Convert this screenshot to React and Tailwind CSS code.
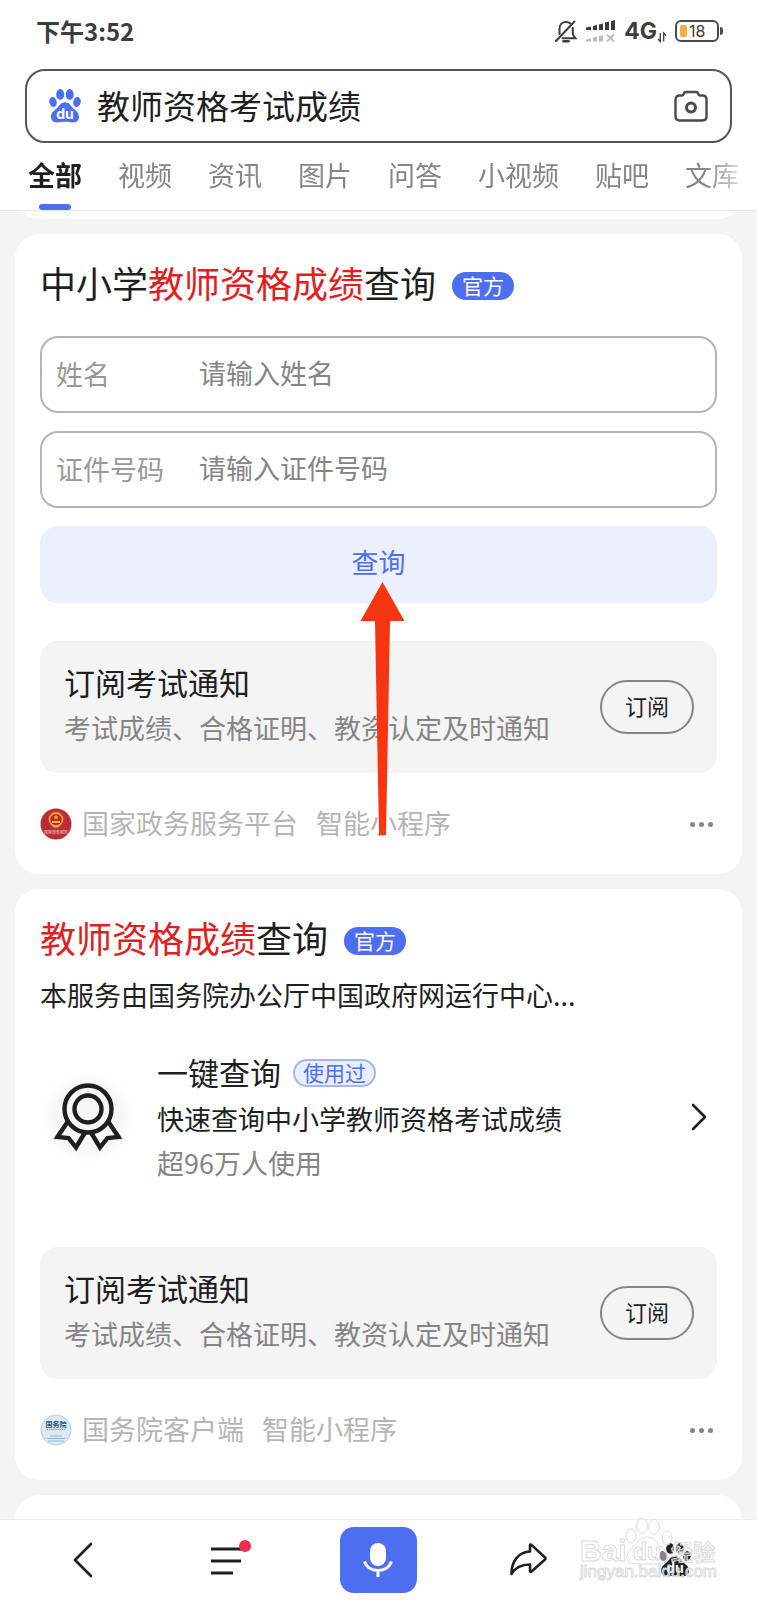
import { useState } from 'react';

const tabs = ['全部', '视频', '资讯', '图片', '问答', '小视频', '贴吧', '文库'];

function Paw({ className, duClass }) {
  return (
    <svg viewBox="0 0 32 34" className={className} fill="currentColor" aria-hidden="true">
      <ellipse cx="11.2" cy="5.4" rx="4" ry="5.3" />
      <ellipse cx="20.7" cy="5.4" rx="4" ry="5.3" />
      <ellipse cx="4" cy="13" rx="3.7" ry="5" transform="rotate(-12 4 13)" />
      <ellipse cx="28" cy="13" rx="3.7" ry="5" transform="rotate(12 28 13)" />
      <path d="M16 13.2c3.4 0 5 2.2 6.6 4.4 2.4 3.2 7.4 5.2 7.4 10.2 0 4.2-3 5.8-6.2 5.6-2.6-.2-5-.7-7.8-.7s-5.2.5-7.8.7C5 33.6 2 32 2 27.8c0-5 5-7 7.4-10.2C11 15.4 12.6 13.2 16 13.2z" />
      <text x="16" y="30" textAnchor="middle" className={duClass}>du</text>
    </svg>
  );
}

function StatusBar() {
  return (
    <div className="flex h-[62px] items-center justify-between pl-9 pr-[34px] text-[#3c3c3c]">
      <span className="text-2xl font-bold">下午3:52</span>
      <div className="flex items-center gap-2">
        <svg viewBox="0 0 24 24" className="size-6" fill="none" stroke="currentColor" strokeWidth="2" strokeLinecap="round">
          <path d="M2 22 20.5 2.5" />
          <path d="M5.5 15V9.5C5.5 5.5 8.3 3 12 3c1.8 0 3.2.5 4.3 1.5M18.8 9v6.5l2.7 3.8H8.5" />
          <path d="M9.5 22.2h5" strokeWidth="2.5" />
        </svg>
        <svg viewBox="0 0 30 24" className="h-6 w-[30px]" fill="currentColor">
          <path d="M0 8.5 5 7.5V11H0zM7 7l4-1v5H7zM13 5.5l4-1V11h-4zM19 3.5l4-1V11h-4zM25 2l4-1v10h-4z" />
          <path d="M0 20.5l5-1v3H0zM7 18.5l4-1v5H7zM13 17l4-1v6.5h-4z" fill="#bdbdbd" />
          <path d="m21 15.5 7 7m0-7-7 7" stroke="#bdbdbd" strokeWidth="2" />
        </svg>
        <div className="flex items-end">
          <span className="font-[Inter] text-[23px] leading-6 font-bold">4G</span>
          <svg viewBox="0 0 10 12" className="h-3 w-2.5" fill="none" stroke="currentColor" strokeWidth="1.3">
            <path d="M3.3 2v8.5L1 8M6.7 10.5V2L9 4.5" />
          </svg>
        </div>
        <div className="flex items-center">
          <div className="flex h-[22px] w-11 items-center gap-0.5 rounded-md border-2 border-[#4a4a4a] pl-[3px]">
            <span className="h-3 w-[7px] rounded-xs bg-[#f0b040]" />
            <span className="font-[Inter] text-base leading-4">18</span>
          </div>
          <span className="ml-px h-2 w-[3px] rounded-r-full bg-[#4a4a4a]" />
        </div>
      </div>
    </div>
  );
}

function SearchHeader() {
  const [query, setQuery] = useState('教师资格考试成绩');

  return (
    <header className="relative z-10 border-b border-[#e8e8e8] bg-white">
      <StatusBar />
      <div className="px-[25px] pt-[7px]">
        <form className="flex h-[74px] items-center rounded-[20px] border-2 border-[#555] px-[22px]">
          <Paw className="h-[34px] w-8 shrink-0 text-[#4e6ef2]" duClass="fill-white font-[Inter] text-[14px] font-bold" />
          <input
            aria-label="搜索"
            value={query}
            onChange={(e) => setQuery(e.target.value)}
            className="ml-4 min-w-0 flex-1 pb-0.5 text-[33px] leading-[48px] text-[#1f1f1f] outline-none"
          />
          <button type="button" aria-label="拍照搜索" className="text-[#4a4a4a]">
            <svg viewBox="0 0 34 32" className="h-8 w-[34px]" fill="none" stroke="currentColor" strokeWidth="2.4" strokeLinejoin="round">
              <path d="M5.5 5.5h2.7c.8 0 1.3-.5 1.5-1.5C10 2.5 10.5 2 12 2h10c1.5 0 2 .5 2.3 2 .2 1 .7 1.5 1.5 1.5h2.7c2.5 0 4 1.5 4 4v17c0 2.5-1.5 4-4 4h-23c-2.5 0-4-1.5-4-4v-17c0-2.5 1.5-4 4-4z" />
              <circle cx="17" cy="17.5" r="4.5" strokeWidth="3" />
            </svg>
          </button>
        </form>
      </div>
      <nav className="mr-4 flex gap-9 overflow-hidden mask-r-from-95% mask-r-to-102% pl-7 text-[27px] whitespace-nowrap text-[#858585]">
        {tabs.map((tab, i) => (
          <a key={tab} href="#" className={i === 0 ? 'flex flex-col items-center font-bold text-[#1f1f1f]' : ''}>
            <span className="block pt-3 leading-[40px]">{tab}</span>
            {i === 0 && <span className="mt-[9px] block h-1.5 w-8 rounded-full bg-[#4e6ef2]" />}
          </a>
        ))}
      </nav>
    </header>
  );
}

function Title({ before, highlight, after }) {
  return (
    <div className="flex items-center gap-4">
      <h2 className="text-4xl leading-[52px] text-[#1f1f1f]">
        {before}
        <span className="text-[#e02020]">{highlight}</span>
        {after}
      </h2>
      <span className="mt-2 flex h-7 items-center rounded-full bg-[#4e6ef2] px-2.5 text-[21px] text-white">官方</span>
    </div>
  );
}

function Field({ id, label, placeholder }) {
  return (
    <div className="flex h-[77px] items-center rounded-[18px] border-2 border-[#b5b5b5] pl-3.5 text-[27px]">
      <label htmlFor={id} className="w-[143px] shrink-0 text-[#999]">{label}</label>
      <input id={id} placeholder={placeholder} className="min-w-0 flex-1 pb-0.5 outline-none placeholder:text-[#858585]" />
    </div>
  );
}

function Subscribe() {
  return (
    <div className="flex h-[132px] items-center justify-between rounded-[18px] bg-[#f4f4f4] pr-[23px] pl-6">
      <div className="pb-1.5">
        <h3 className="text-[31px] leading-[48px] text-[#1f1f1f]">订阅考试通知</h3>
        <p className="text-[27px] leading-[44px] text-[#858585]">考试成绩、合格证明、教资认定及时通知</p>
      </div>
      <button className="h-[54px] w-[94px] rounded-full border-2 border-[#858585] pb-1 text-[22px] text-[#1f1f1f]">订阅</button>
    </div>
  );
}

function Source({ icon, name }) {
  return (
    <div className="flex h-10 items-center text-[27px] leading-[38px] text-[#b5b5b5]">
      {icon}
      <span className="ml-2.5 pb-0.5">{name}</span>
      <span className="ml-[18px] pb-0.5">智能小程序</span>
      <button aria-label="更多" className="mr-1 ml-auto flex gap-1">
        <span className="size-[5px] rounded-full bg-[#858585]" />
        <span className="size-[5px] rounded-full bg-[#858585]" />
        <span className="size-[5px] rounded-full bg-[#858585]" />
      </button>
    </div>
  );
}

function GovEmblem() {
  return (
    <svg viewBox="0 0 32 32" className="size-8">
      <circle cx="16" cy="16" r="15.5" fill="#b92f38" />
      <circle cx="16" cy="11.5" r="6.5" fill="#c8202a" stroke="#f0a040" strokeWidth="1.8" />
      <path d="m16 6.5.8 1.7 1.8.2-1.3 1.2.3 1.8-1.6-.9-1.6.9.3-1.8-1.3-1.2 1.8-.2zM12 13h8v2h-8zM13.5 17.5h5v2h-5z" fill="#f5b545" />
      <text x="16" y="26" textAnchor="middle" className="fill-[#f3cfc8] text-[4px]">国家政务服务</text>
    </svg>
  );
}

function CouncilEmblem() {
  return (
    <svg viewBox="0 0 32 32" className="size-8">
      <circle cx="16" cy="16" r="15" fill="#dceaf4" stroke="#b9cbd8" />
      <text x="16" y="13" textAnchor="middle" className="fill-[#1a5a8a] text-[7px] font-bold">国务院</text>
      <path d="M6.5 15.5h19" stroke="#7d9db5" strokeDasharray="1.5 .7" />
      <path d="M10 22h12M7 24.5h18M8 27h16" stroke="#8fb8d4" />
    </svg>
  );
}

function Award() {
  return (
    <svg viewBox="0 0 68 68" className="size-[68px] rounded-full bg-[#f7f7f7] shadow-[0_0_16px_4px_#f3f3f3]" overflow="visible" fill="none" stroke="#1f1f1f" strokeWidth="4.4">
      <circle cx="34" cy="26" r="23.5" />
      <circle cx="34" cy="26" r="13.5" />
      <path d="M13.5 39 3.5 54l11 1 7.5 9.5L31 49.5M54.5 39l10 15-11 1-7.5 9.5L37 49.5" />
    </svg>
  );
}

function Watermark() {
  return (
    <svg viewBox="0 0 138 66" className="pointer-events-none absolute right-10 -top-1 h-[66px] w-[138px]" fill="#fff" fillOpacity="0.45" stroke="#dcdcdc">
      <ellipse cx="63" cy="10" rx="5.5" ry="7.5" />
      <ellipse cx="75" cy="11" rx="5.5" ry="7.5" />
      <ellipse cx="52" cy="20" rx="5" ry="7" />
      <ellipse cx="88" cy="22" rx="5" ry="7" />
      <path d="M68 21c7 0 9 5 13 9 5 4 8 8 7 13-1 5-6 5-20 5s-19 0-20-5c-1-5 3-9 7-13 4-4 6-9 13-9z" />
      <text x="1" y="45" className="font-[Liberation_Sans] text-[30px] font-bold">Bai</text>
      <text x="54" y="44" className="font-[Liberation_Sans] text-[23px] font-bold">du</text>
      <text x="92" y="44" className="text-[22px] font-bold">经验</text>
      <text x="1" y="61" className="font-[Liberation_Sans] text-[17px]">jingyan.baidu.com</text>
    </svg>
  );
}

function BottomNav() {
  return (
    <nav className="relative grid h-[81px] grid-cols-5 place-items-center border-t border-[#ececec] bg-white px-2 text-[#1f1f1f]">
      <button aria-label="返回">
        <svg viewBox="0 0 20 36" className="h-9 w-5" fill="none" stroke="currentColor" strokeWidth="2.6" strokeLinecap="round" strokeLinejoin="round">
          <path d="M19 2 3 18l16 16" />
        </svg>
      </button>
      <button aria-label="菜单">
        <svg viewBox="0 0 42 42" className="size-[42px]" fill="none" stroke="currentColor" strokeWidth="2.8">
          <path d="M2 10h30M2 22h30M2 34h22" />
          <circle cx="36" cy="7" r="6" fill="#f5284d" stroke="none" />
        </svg>
      </button>
      <button aria-label="语音搜索" className="flex h-[66px] w-[77px] items-center justify-center rounded-[14px] bg-[#4e6ef2] text-white">
        <svg viewBox="0 0 30 36" className="h-9 w-[30px]" fill="none" stroke="currentColor" strokeWidth="3">
          <rect x="7" y="1" width="16" height="23" rx="8" fill="currentColor" stroke="none" />
          <path d="M1.5 19.5c2 5.500 7 9 13.5 9s11.500-3.500 13.5-9M15 28.5v6.500" />
        </svg>
      </button>
      <button aria-label="分享">
        <svg viewBox="0 0 38 34" className="h-[34px] w-[38px]" overflow="visible" fill="none" stroke="currentColor" strokeWidth="2.6" strokeLinejoin="round">
          <path d="M22 2.500c0-1 .8-1.300 1.500-.6L37 14.500c.7.7.7 1.300 0 2L23.500 28.500c-.7.6-1.500.3-1.500-.6v-6.400C13.500 21.500 7.500 24 3.500 31 3.500 18 10.500 9 22 8.500z" />
        </svg>
      </button>
      <button aria-label="首页">
        <Paw className="h-[34px] w-8" duClass="fill-white font-[Inter] text-[14px] font-bold" />
      </button>
      <Watermark />
    </nav>
  );
}

export default function App() {
  return (
    <div className="flex min-h-screen flex-col bg-[#f4f4f4] font-['Noto_Sans_CJK_SC',sans-serif]">
      <SearchHeader />
      <main className="flex flex-1 flex-col gap-[15px] px-[15px]">
        <div className="-mt-10 h-12 rounded-b-3xl bg-white" />

        <section className="relative rounded-3xl bg-white px-[25px] pt-[22px] pb-[30px]">
          <Title before="中小学" highlight="教师资格成绩" after="查询" />
          <form className="mt-7 flex flex-col gap-[18px]">
            <Field id="name" label="姓名" placeholder="请输入姓名" />
            <Field id="idcard" label="证件号码" placeholder="请输入证件号码" />
            <button type="button" className="h-[77px] rounded-[18px] bg-[#ecf0fe] pb-1 text-[27px] text-[#4e6ef2]">查询</button>
          </form>
          <div className="mt-[38px] mb-[31px]">
            <Subscribe />
          </div>
          <Source icon={<GovEmblem />} name="国家政务服务平台" />
          <svg viewBox="0 0 46 254" className="pointer-events-none absolute bottom-[38px] left-1/2 ml-[-19px] h-[254px] w-[46px]" fill="#f73510">
            <path d="M22.5 0 44.5 39H30L26 253h-7L15 39H.5z" />
          </svg>
        </section>

        <section className="rounded-3xl bg-white px-[25px] pt-[22px] pb-[30px]">
          <Title highlight="教师资格成绩" after="查询" />
          <p className="mt-3 truncate text-[27px] leading-10 text-[#1f1f1f]">本服务由国务院办公厅中国政府网运行中心...</p>
          <a href="#" className="mt-[34px] flex items-center pr-2.5 pl-3.5 text-[#1f1f1f]">
            <Award />
            <div className="ml-[35px] flex-1">
              <div className="flex items-center gap-3">
                <h3 className="pb-0.5 text-[31px] leading-[46px]">一键查询</h3>
                <span className="flex h-7 items-center rounded-full border-2 border-[#a7b6ee] bg-[#e9effd] px-2 text-[21px] text-[#4e6ef2]">使用过</span>
              </div>
              <p className="text-[27px] leading-[44px]">快速查询中小学教师资格考试成绩</p>
              <p className="text-[27px] leading-[44px] text-[#858585]">超96万人使用</p>
            </div>
            <svg viewBox="0 0 16 28" className="h-7 w-4" fill="none" stroke="currentColor" strokeWidth="2.6" strokeLinecap="round" strokeLinejoin="round">
              <path d="m2 2 12 12L2 26" />
            </svg>
          </a>
          <div className="mt-[62px] mb-[31px]">
            <Subscribe />
          </div>
          <Source icon={<CouncilEmblem />} name="国务院客户端" />
        </section>

        <div className="min-h-[22px] flex-1 rounded-t-3xl bg-white" />
      </main>
      <BottomNav />
    </div>
  );
}
